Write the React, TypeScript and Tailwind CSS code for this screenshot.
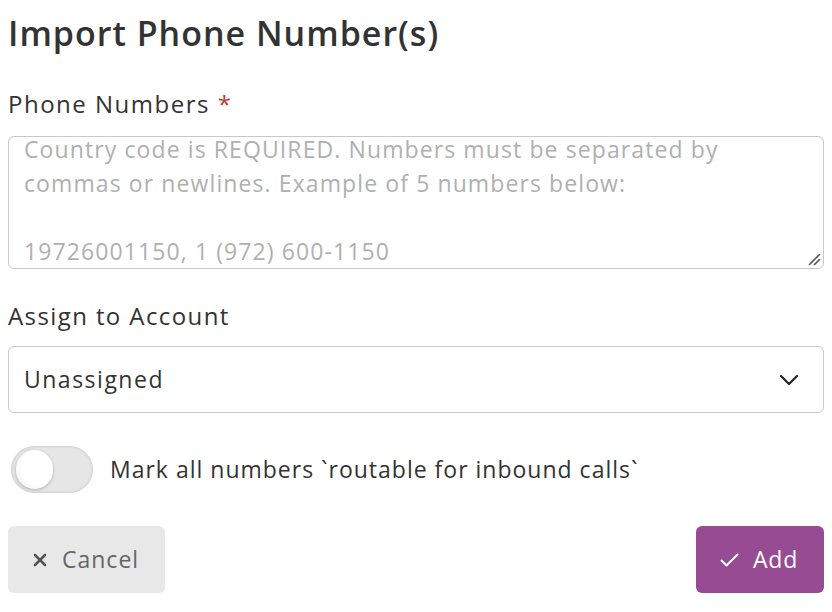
export default function App() {
  const placeholder =
    "Country code is REQUIRED. Numbers must be separated by\ncommas or newlines. Example of 5 numbers below:\n\n19726001150, 1 (972) 600-1150";

  return (
    <div className="min-h-[612px] w-[832px] bg-white px-2 pt-[9px] font-['Open_Sans',sans-serif] text-[#333]">
      {/* heading */}
      <h1 className="h-[48px] text-[34px] font-semibold leading-[48px] tracking-[1px] text-[#333]">
        Import Phone Number(s)
      </h1>

      {/* phone numbers */}
      <label className="mt-[31px] block text-[24px] font-medium leading-[32px] tracking-[1.5px]">
        Phone Numbers <span className="text-[#c0392b]">*</span>
      </label>
      <div className="relative mt-[16px] h-[133px] w-full overflow-hidden rounded-[6px] border border-[#c8c8c8]">
        <textarea
          className="-mt-[5px] block h-[136px] w-full resize-none px-[15px] py-0 text-[23px] leading-[34px] tracking-[1.1px] text-[#333] outline-none placeholder:text-[#b0b0b0]"
          placeholder={placeholder}
        />
        {/* resize grip */}
        <svg className="pointer-events-none absolute bottom-[2px] right-[2px]" width="14" height="14" viewBox="0 0 14 14" stroke="#555" strokeWidth="1.6" strokeLinecap="round">
          <path d="M12.5 2.5l-10 10M12.5 7.5l-5 5" />
        </svg>
      </div>

      {/* account */}
      <label className="mt-[31px] block text-[24px] font-medium leading-[32px] tracking-[1.4px]">
        Assign to Account
      </label>
      <div className="mt-[14px] flex h-[67px] w-full items-center justify-between rounded-[6px] border border-[#c8c8c8] pl-[15px] pr-[24px]">
        <span className="text-[23px] tracking-[1.5px] text-[#333]">Unassigned</span>
        <svg width="20" height="12" viewBox="0 0 20 12" fill="none" stroke="#222" strokeWidth="2.2" strokeLinecap="round" strokeLinejoin="round">
          <path d="M2 2l8 8 8-8" />
        </svg>
      </div>

      {/* routable toggle */}
      <div className="mt-[33px] flex items-center gap-[17px] pl-[3px]">
        <button
          type="button"
          aria-pressed="false"
          className="relative h-[47px] w-[82px] shrink-0 rounded-full bg-[#e6e6e6] shadow-[inset_0_0_3px_rgba(0,0,0,0.18)]"
        >
          <span className="absolute left-[5px] top-[4px] h-[39px] w-[37px] rounded-full bg-[radial-gradient(circle_at_60%_45%,#ffffff_55%,#e8e8e8_100%)] shadow-[0_1px_3px_rgba(0,0,0,0.25)]" />
        </button>
        <span className="text-[23px] tracking-[1px] text-[#333]">
          Mark all numbers `routable for inbound calls`
        </span>
      </div>

      {/* actions */}
      <div className="mt-[33px] flex items-center justify-between">
        <button
          type="button"
          className="flex h-[67px] w-[157px] items-center gap-[15px] rounded-[6px] bg-[#e8e8e8] pl-[25px] text-[23px] tracking-[1px] text-[#666]"
        >
          <svg width="14" height="14" viewBox="0 0 14 14" stroke="#555" strokeWidth="2.6" strokeLinecap="round">
            <path d="M2 2l10 10M12 2L2 12" />
          </svg>
          Cancel
        </button>
        <button
          type="button"
          className="flex h-[67px] w-[128px] items-center gap-[14px] rounded-[6px] bg-[#974b93] pl-[24px] text-[23px] tracking-[0.8px] text-white"
        >
          <svg width="19" height="14" viewBox="0 0 19 14" fill="none" stroke="#fff" strokeWidth="2" strokeLinecap="round" strokeLinejoin="round">
            <path d="M1.5 7.5l5 5L17.5 1.5" />
          </svg>
          Add
        </button>
      </div>
    </div>
  );
}
